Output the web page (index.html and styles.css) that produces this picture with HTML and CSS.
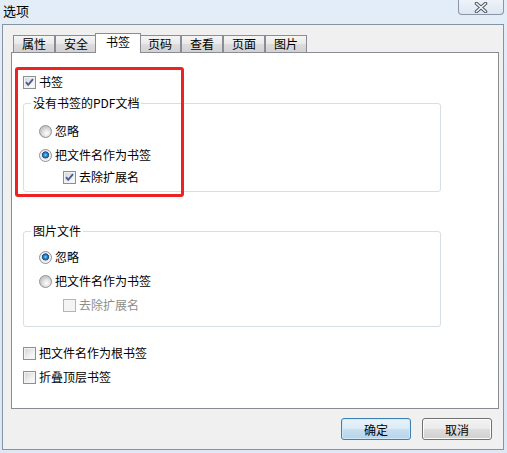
FILE: index.html
```html
<!DOCTYPE html>
<html lang="zh-CN">
<head>
    <meta charset="UTF-8">
    <title>选项</title>
    <link rel="stylesheet" href="styles.css">
</head>
<body>

<div class="titlebar">
    <div class="title">选项</div>
    <button type="button" class="close" aria-label="关闭">
        <svg width="14" height="11" viewBox="0 0 14 11">
            <path d="M2.5 1.5l9 8M11.5 1.5l-9 8" stroke="#4d5866" stroke-width="3.6" stroke-linecap="round"/>
            <path d="M2.5 1.5l9 8M11.5 1.5l-9 8" stroke="#f6f8fb" stroke-width="1.6" stroke-linecap="round"/>
        </svg>
    </button>
</div>

<div class="client">
    <div class="tabs">
        <div class="tab">属性</div>
        <div class="tab">安全</div>
        <div class="tab active">书签</div>
        <div class="tab">页码</div>
        <div class="tab">查看</div>
        <div class="tab">页面</div>
        <div class="tab">图片</div>
    </div>

    <div class="panel">
        <div class="mark"></div>

        <label class="row">
            <span class="check on"><svg viewBox="0 0 11 11"><path d="M2 5.2l2.2 2.6L9 2.2" /></svg></span>书签
        </label>

        <fieldset class="group first">
            <legend>没有书签的PDF文档</legend>
            <label class="row opt"><span class="radio"></span>忽略</label>
            <label class="row opt"><span class="radio on"></span>把文件名作为书签</label>
            <label class="row opt sub short">
                <span class="check on"><svg viewBox="0 0 11 11"><path d="M2 5.2l2.2 2.6L9 2.2" /></svg></span>去除扩展名
            </label>
        </fieldset>

        <fieldset class="group second">
            <legend>图片文件</legend>
            <label class="row opt"><span class="radio on"></span>忽略</label>
            <label class="row opt"><span class="radio"></span>把文件名作为书签</label>
            <label class="row opt sub disabled"><span class="check"></span>去除扩展名</label>
        </fieldset>

        <div class="bottom-opts">
            <label class="row opt"><span class="check"></span>把文件名作为根书签</label>
            <label class="row opt"><span class="check"></span>折叠顶层书签</label>
        </div>
    </div>

    <div class="buttons">
        <button type="button" class="btn default">确定</button>
        <button type="button" class="btn">取消</button>
    </div>
</div>

</body>
</html>
```

FILE: styles.css
```css
body {
    margin: 0;
    width: 507px;
    height: 453px;
    overflow: hidden;
    font-family: "Noto Sans CJK SC", "Liberation Sans", sans-serif;
    font-size: 12px;
    color: #000;
    background: linear-gradient(to bottom, #e3edf8, #d9e6f4 60%, #dce8f5);
}

/* title bar */
.titlebar {
    height: 24px;
    display: flex;
    justify-content: space-between;
    align-items: flex-start;
}
.title {
    padding: 4px 0 0 3px;
    line-height: 14px;
    font-size: 13px;
}
.close {
    width: 46px;
    height: 15px;
    margin-right: 3px;
    padding: 0;
    border: 1px solid #8a96a6;
    border-top: none;
    border-radius: 0 0 4px 4px;
    background: linear-gradient(to bottom, #eef3f9, #dde6f1);
    display: flex;
    align-items: center;
    justify-content: center;
}

/* client area */
.client {
    height: 426px;
    box-sizing: border-box;
    margin: 0 3px 0 2px;
    padding: 8px 0 0 8px;
    border: 1px solid #8593a3;
    background-color: #f0f0f0;
}

.tabs {
    display: flex;
    align-items: flex-end;
    height: 19px;
    padding-left: 2px;
}
.tab {
    width: 42px;
    height: 17px;
    box-sizing: border-box;
    border: 1px solid #898c95;
    border-bottom: none;
    text-align: center;
    line-height: 16px;
    background: linear-gradient(to bottom, #f5f5f5, #e8e8e8 50%, #dcdcdc 51%, #d2d2d2);
}
.tab.active {
    width: 46px;
    height: 20px;
    margin: 0 -2px -1px;
    line-height: 15px;
    background: #fff;
    position: relative;
    z-index: 1;
}

.panel {
    position: relative;
    width: 488px;
    height: 357px;
    box-sizing: border-box;
    padding: 21px 0 0 11px;
    border: 1px solid #898c95;
    background-color: #fff;
}

.mark {
    position: absolute;
    left: 3px;
    top: 14px;
    width: 169px;
    height: 130px;
    box-sizing: border-box;
    border: 3px solid #ee2222;
    border-radius: 3px;
}

.row {
    display: flex;
    align-items: center;
    gap: 3px;
    height: 16px;
    line-height: 14px;
}
.opt {
    height: 24px;
}
.sub {
    padding-left: 24px;
}
.short {
    height: 20px;
}
.disabled {
    color: #8d8d8d;
}

.group {
    width: 418px;
    box-sizing: border-box;
    margin: 0;
    min-width: 0;
    border: 1px solid #d5dfe5;
    border-radius: 3px;
}
.group legend {
    margin-left: -8px;
    padding: 0 2px;
    line-height: 14px;
}
.first {
    margin-top: 6px;
    padding: 9px 0 4px 15px;
}
.second {
    margin-top: 32px;
    padding: 7px 0 9px 15px;
}
.bottom-opts {
    margin-top: 14px;
}

/* checkbox and radio */
.check, .radio {
    flex: none;
    width: 13px;
    height: 13px;
    box-sizing: border-box;
    border: 1px solid #8e8f8f;
    display: inline-flex;
    align-items: center;
    justify-content: center;
}
.check {
    background: linear-gradient(135deg, #d0d3d7, #f4f5f6 70%, #fff);
    box-shadow: inset 0 0 0 1px #f2f2f2;
}
.check svg {
    width: 11px;
    height: 11px;
}
.check path {
    fill: none;
    stroke: #4a5d94;
    stroke-width: 1.9;
}
.disabled .check {
    border-color: #b5b5b5;
    background: #f4f4f4;
    box-shadow: none;
}
.radio {
    border-radius: 50%;
    border-color: #909090;
    background: radial-gradient(circle at 60% 65%, #fdfdfd 0, #e8e8e8 3px, #c9c9c9 6px);
}
.radio.on {
    background: radial-gradient(circle at 50% 45%, #9fe0ff 0, #3b9ad8 1.2px, #1d5fa6 2.8px, #2a4f7a 3.3px, #e2e6ea 3.8px, #f3f4f5 5.5px);
}

/* buttons */
.buttons {
    width: 488px;
    display: flex;
    justify-content: flex-end;
    gap: 11px;
    margin-top: 9px;
    padding-right: 7px;
    box-sizing: border-box;
}
.btn {
    width: 70px;
    height: 22px;
    padding: 0;
    font-family: inherit;
    font-size: 12px;
    color: #000;
    border: 1px solid #707070;
    border-radius: 3px;
    background: linear-gradient(to bottom, #f2f2f2, #ebebeb 50%, #dddddd 51%, #cfcfcf);
    box-shadow: inset 0 0 0 1px #fcfcfc;
}
.btn.default {
    border-color: #3c7fb1;
    background: linear-gradient(to bottom, #e8f3fb, #dbeaf6 50%, #c8def0 51%, #b7d3ea);
    box-shadow: inset 0 0 0 1px #cdeafc;
}
```
